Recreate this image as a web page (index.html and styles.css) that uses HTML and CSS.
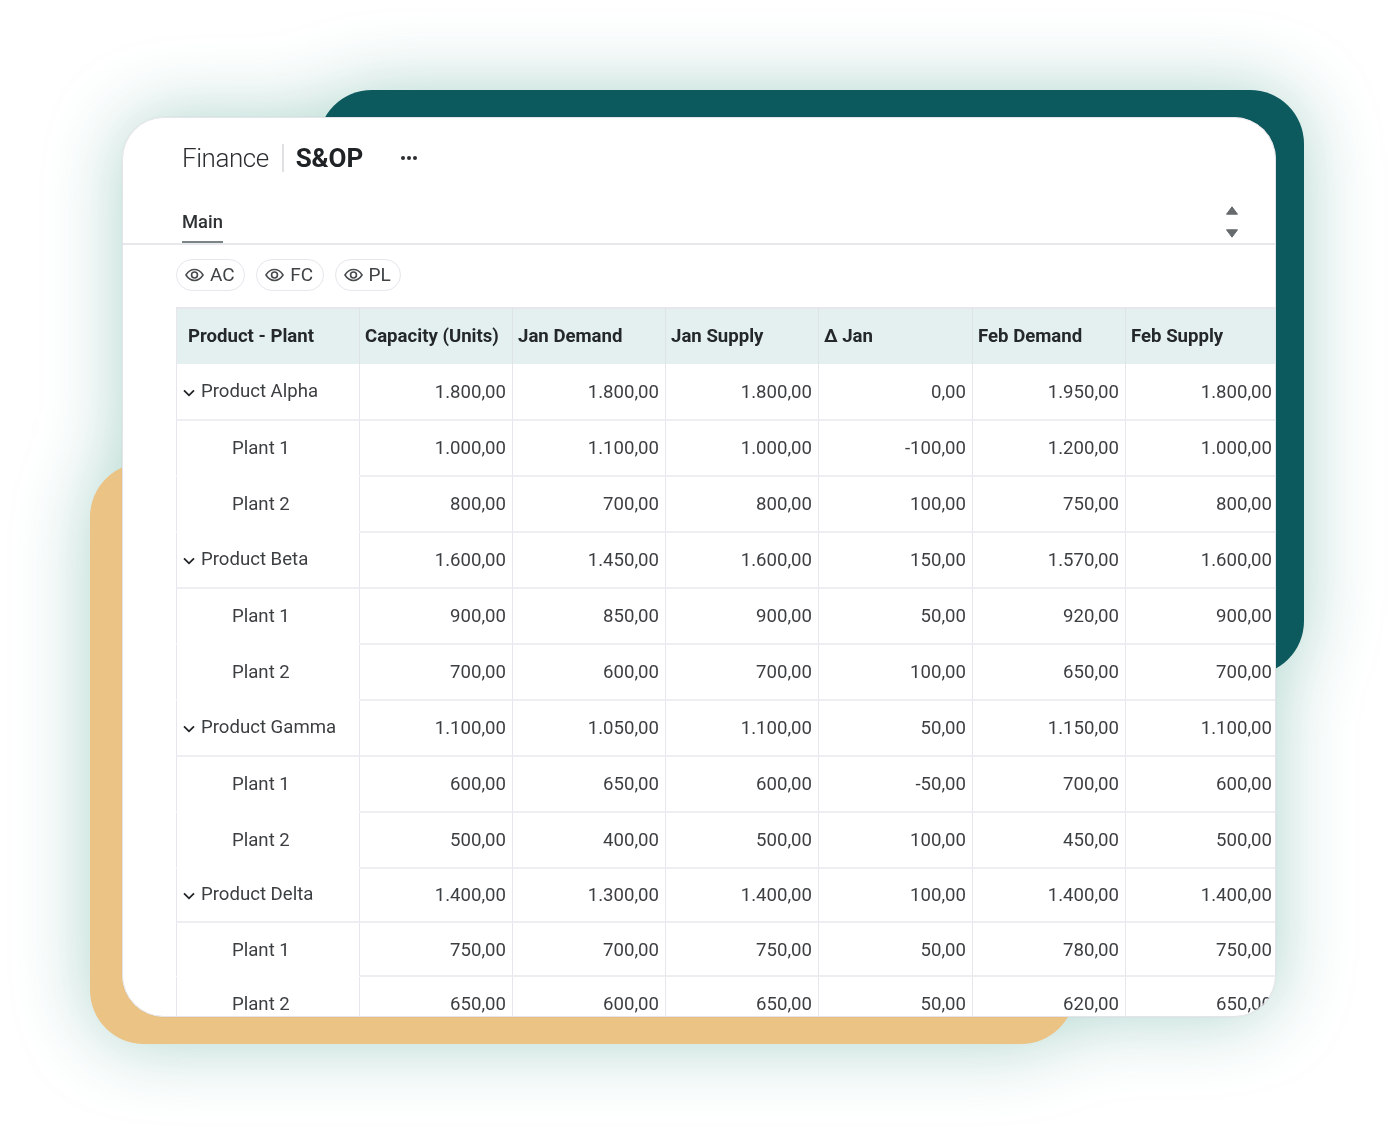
FILE: index.html
```html
<!DOCTYPE html>
<html lang="en">
<head>
<meta charset="utf-8">
<title>Finance S&amp;OP</title>
<link rel="stylesheet" href="styles.css">
</head>
<body>
<svg class="defs" width="0" height="0" aria-hidden="true">
  <symbol id="eye" viewBox="0 0 20 14"><path d="M1 7C3.4 3.2 6.4 1.3 10 1.3S16.6 3.2 19 7c-2.4 3.8-5.400 5.700-9 5.700S3.400 10.800 1 7Z" fill="none" stroke="currentColor" stroke-width="1.600"/><circle cx="10" cy="7" r="3.100" fill="none" stroke="currentColor" stroke-width="1.700"/></symbol>
  <symbol id="chev" viewBox="0 0 12 8"><path d="M1 1.300 6 6.300l5-5" fill="none" stroke="currentColor" stroke-width="1.800"/></symbol>
</svg>
<main class="stage">
  <div class="glow">
    <div class="deco deco-teal"></div>
    <div class="deco deco-gold"></div>
    <div class="card">
      <header class="title">
        <span class="app">Finance</span>
        <span class="page">S&amp;OP</span>
        <span class="more" aria-label="More"><i></i><i></i><i></i></span>
      </header>
      <nav class="tabs">
        <a class="tab">Main</a>
        <span class="scroller">
          <svg width="12" height="9" viewBox="0 0 12 9"><path d="M6 .8 11.500 8.200H.5Z" fill="#666a6c" stroke="#666a6c" stroke-linejoin="round"/></svg>
          <svg width="12" height="9" viewBox="0 0 12 9"><path d="M6 8.200 11.500.8H.5Z" fill="#666a6c" stroke="#666a6c" stroke-linejoin="round"/></svg>
        </span>
      </nav>
      <div class="chips">
        <span class="chip"><svg class="eye"><use href="#eye"/></svg>AC</span>
        <span class="chip"><svg class="eye"><use href="#eye"/></svg>FC</span>
        <span class="chip"><svg class="eye"><use href="#eye"/></svg>PL</span>
      </div>
      <table class="grid">
        <colgroup><col class="c0"><col class="c1"><col class="c2"><col class="c3"><col class="c4"><col class="c5"><col class="c6"></colgroup>
        <thead>
          <tr><th class="first">Product - Plant</th><th>Capacity (Units)</th><th>Jan Demand</th><th>Jan Supply</th><th>Δ Jan</th><th>Feb Demand</th><th>Feb Supply</th></tr>
        </thead>
        <tbody>
          <tr class="product top"><td class="name"><svg class="chev"><use href="#chev"/></svg>Product Alpha</td><td>1.800,00</td><td>1.800,00</td><td>1.800,00</td><td>0,00</td><td>1.950,00</td><td>1.800,00</td></tr>
          <tr><td class="name plant">Plant 1</td><td>1.000,00</td><td>1.100,00</td><td>1.000,00</td><td>-100,00</td><td>1.200,00</td><td>1.000,00</td></tr>
          <tr><td class="name plant">Plant 2</td><td>800,00</td><td>700,00</td><td>800,00</td><td>100,00</td><td>750,00</td><td>800,00</td></tr>
          <tr class="product"><td class="name"><svg class="chev"><use href="#chev"/></svg>Product Beta</td><td>1.600,00</td><td>1.450,00</td><td>1.600,00</td><td>150,00</td><td>1.570,00</td><td>1.600,00</td></tr>
          <tr><td class="name plant">Plant 1</td><td>900,00</td><td>850,00</td><td>900,00</td><td>50,00</td><td>920,00</td><td>900,00</td></tr>
          <tr><td class="name plant">Plant 2</td><td>700,00</td><td>600,00</td><td>700,00</td><td>100,00</td><td>650,00</td><td>700,00</td></tr>
          <tr class="product"><td class="name"><svg class="chev"><use href="#chev"/></svg>Product Gamma</td><td>1.100,00</td><td>1.050,00</td><td>1.100,00</td><td>50,00</td><td>1.150,00</td><td>1.100,00</td></tr>
          <tr><td class="name plant">Plant 1</td><td>600,00</td><td>650,00</td><td>600,00</td><td>-50,00</td><td>700,00</td><td>600,00</td></tr>
          <tr><td class="name plant">Plant 2</td><td>500,00</td><td>400,00</td><td>500,00</td><td>100,00</td><td>450,00</td><td>500,00</td></tr>
          <tr class="product short"><td class="name"><svg class="chev"><use href="#chev"/></svg>Product Delta</td><td>1.400,00</td><td>1.300,00</td><td>1.400,00</td><td>100,00</td><td>1.400,00</td><td>1.400,00</td></tr>
          <tr class="shorter"><td class="name plant">Plant 1</td><td>750,00</td><td>700,00</td><td>750,00</td><td>50,00</td><td>780,00</td><td>750,00</td></tr>
          <tr class="shorter"><td class="name plant">Plant 2</td><td>650,00</td><td>600,00</td><td>650,00</td><td>50,00</td><td>620,00</td><td>650,00</td></tr>
        </tbody>
      </table>
    </div>
  </div>
</main>
</body>
</html>
```

FILE: styles.css
```css
* { box-sizing: border-box; }
html, body { margin: 0; background: #fff; }
body {
  width: 1394px;
  height: 1135px;
  overflow: hidden;
  font-family: Roboto, "Liberation Sans", sans-serif;
  color: #3c3f42;
}
.defs { position: absolute; }
.stage { padding: 117px 0 0 122px; }
.glow {
  position: relative;
  width: 1154px;
  height: 900px;
  filter: drop-shadow(0 0 38px rgba(15, 129, 106, .34));
}
.deco { position: absolute; border-radius: 54px; }
.deco-teal {
  left: 196px;
  top: -27px;
  width: 986px;
  height: 585px;
  background: #0d5a5e;
}
.deco-gold {
  left: -32px;
  top: 346px;
  width: 985px;
  height: 581px;
  background: #ebc385;
}
.card {
  position: relative;
  width: 1154px;
  height: 900px;
  overflow: hidden;
  border-radius: 42px;
  background: #fff;
  box-shadow: 0 0 1px rgba(0, 0, 0, .18);
}
.card::after {
  content: "";
  position: absolute;
  inset: 0;
  border-radius: inherit;
  box-shadow: inset 0 0 0 1px rgba(225, 225, 232, .9);
  pointer-events: none;
}
.title {
  display: flex;
  align-items: center;
  height: 32px;
  margin: 25px 0 0 60px;
}
.app {
  font-size: 26px;
  font-weight: 300;
  letter-spacing: -.45px;
  color: #2b2e30;
  padding-right: 13px;
  border-right: 2px solid #dfe0e2;
  line-height: 28px;
}
.page {
  font-size: 26px;
  font-weight: 700;
  letter-spacing: -.1px;
  color: #202325;
  margin-left: 12px;
}
.more { display: flex; gap: 2px; margin-left: 38px; }
.more i { width: 4px; height: 4px; border-radius: 50%; background: #2b2e30; }
.tabs {
  display: flex;
  justify-content: space-between;
  height: 40px;
  margin-top: 31px;
  padding: 0 38px 0 60px;
  border-bottom: 2px solid #e7e7ec;
}
.tab {
  height: 38px;
  padding-top: 5px;
  font-size: 18.4px;
  line-height: 23px;
  font-weight: 500;
  color: #2f3234;
  border-bottom: 2px solid #7b8486;
}
.scroller {
  display: flex;
  flex-direction: column;
  justify-content: space-between;
  height: 32px;
  margin-top: 1px;
}
.scroller svg { display: block; }
.chips {
  display: flex;
  gap: 11px;
  margin: 14px 0 16px 54px;
}
.chip {
  display: flex;
  align-items: center;
  gap: 6px;
  height: 32px;
  padding: 0 9.500px 1px 8px;
  border: 1.500px solid #e6e6ec;
  border-radius: 16px;
  font-size: 19px;
  color: #3f4346;
}
.eye { width: 19px; height: 14px; color: #484c4e; }
.grid {
  width: 1103px;
  margin-left: 54px;
  table-layout: fixed;
  border-collapse: separate;
  border-spacing: 0;
  font-size: 18.600px;
}
.c0 { width: 184px; }
.c1, .c2, .c3, .c5 { width: 153px; }
.c4 { width: 154px; }
.c6 { width: 153px; }
th {
  height: 57px;
  padding: 0 0 2px 5px;
  background: #e3f0ef;
  border-top: 2px solid #e6e6ec;
  border-right: 1px solid #e0e3e6;
  text-align: left;
  font-weight: 700;
  color: #25282a;
  white-space: nowrap;
}
th.first { padding-left: 11px; border-left: 1px solid #e6e6ec; }
td {
  height: 56px;
  padding: 0 6px 0 0;
  border-right: 1px solid #e6e6ec;
  border-bottom: 2px solid #eeeef2;
  text-align: right;
  white-space: nowrap;
}
.top td { height: 57px; }
.short td { height: 54px; }
.shorter td { height: 54px; }
td.name {
  padding: 0 0 3px 6px;
  text-align: left;
  border-left: 1px solid #e6e6ec;
  border-bottom-color: transparent;
}
.top td.name { padding-bottom: 1px; }
.product td.name { border-bottom-color: #eeeef2; }
td.plant { padding: 0 0 0 55px; }
.shorter td { padding-top: 2px; }
.chev { width: 12px; height: 8px; margin-right: 6px; color: #202325; }
```
